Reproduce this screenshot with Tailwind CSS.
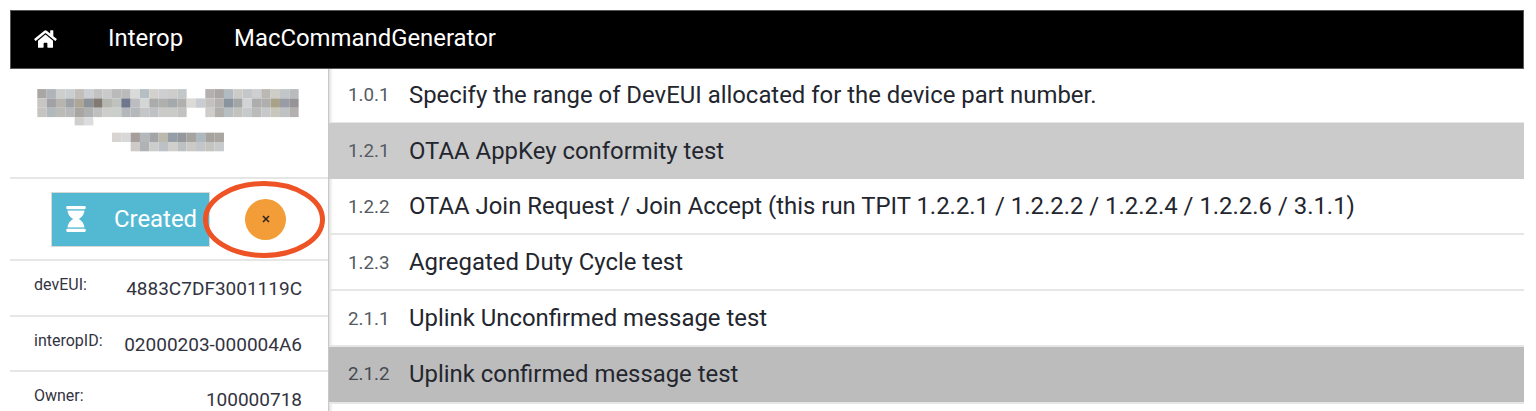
<!DOCTYPE html>
<html>
<head>
<meta charset="utf-8">
<script src="https://cdn.jsdelivr.net/npm/@tailwindcss/browser@4"></script>
</head>
<body class="bg-white">
<div class="h-[411px] w-[1536px] overflow-hidden pt-[10px] pl-[10px] pr-[12px] font-['Roboto',sans-serif]">
  <nav class="h-[59px] bg-black border border-[#555] flex items-center text-white text-[23.9px] pb-[1px]">
    <svg class="ml-[23px] w-[23px] h-[20px]" viewBox="0 0 576 512" fill="#fff"><path d="M280.37 148.26L96 300.11V464a16 16 0 0 0 16 16l112.06-.29a16 16 0 0 0 15.92-16V368a16 16 0 0 1 16-16h64a16 16 0 0 1 16 16v95.64a16 16 0 0 0 16 16.05L464 480a16 16 0 0 0 16-16V300L295.67 148.26a12.19 12.19 0 0 0-15.3 0zM571.6 251.47L488 182.56V44.05a12 12 0 0 0-12-12h-56a12 12 0 0 0-12 12v72.61L318.47 43a48 48 0 0 0-61 0L4.34 251.47a12 12 0 0 0-1.6 16.9l25.5 31A12 12 0 0 0 45.15 301l235.22-193.74a12.19 12.19 0 0 1 15.3 0L530.9 301a12 12 0 0 0 16.9-1.6l25.5-31a12 12 0 0 0-1.7-16.93z"/></svg>
    <span class="ml-[51px]">Interop</span>
    <span class="ml-[51px]">MacCommandGenerator</span>
  </nav>
  <div class="flex">
    <aside class="relative w-[318px] shrink-0 text-[#33333f]">
      <div class="h-[110px] border-b-2 border-[#e6e6e6] flex justify-center pt-[20px]">
        <svg class="w-[280px] h-[79px] blur-[0.6px] brightness-[0.9]" viewBox="0 0 270 76">
          <g fill="#c9c5c2"><rect x="8" y="0" width="9" height="9" fill="#bdb8b6"/><rect x="17" y="0" width="9" height="9" fill="#c4c8cc"/><rect x="26" y="0" width="9" height="9" fill="#e4e6e6"/><rect x="35" y="0" width="9" height="9" fill="#e2e5e8"/><rect x="44" y="0" width="9" height="9" fill="#d8d4d0"/><rect x="53" y="0" width="9" height="9" fill="#e2e5e9"/><rect x="62" y="0" width="9" height="9" fill="#d8d8d8"/><rect x="71" y="0" width="9" height="9" fill="#e0e0e0"/><rect x="80" y="0" width="9" height="9" fill="#cfcfcf"/><rect x="89" y="0" width="9" height="9" fill="#cfd0d0"/><rect x="98" y="0" width="9" height="9" fill="#f2f2f2"/><rect x="107" y="0" width="9" height="9" fill="#c9d3d8"/><rect x="116" y="0" width="9" height="9" fill="#ebe8e4"/><rect x="125" y="0" width="9" height="9" fill="#e4e6e8"/><rect x="134" y="0" width="9" height="9" fill="#e6e4e2"/><rect x="143" y="0" width="9" height="9" fill="#d8dde0"/><rect x="170" y="0" width="9" height="9" fill="#c8c4c2"/><rect x="179" y="0" width="9" height="9" fill="#bdb9b8"/><rect x="188" y="0" width="9" height="9" fill="#c6d0d6"/><rect x="197" y="0" width="9" height="9" fill="#e4e2de"/><rect x="206" y="0" width="9" height="9" fill="#d9dde0"/><rect x="215" y="0" width="9" height="9" fill="#e4e6e8"/><rect x="224" y="0" width="9" height="9" fill="#d0ccc8"/><rect x="233" y="0" width="9" height="9" fill="#e6e4de"/><rect x="242" y="0" width="9" height="9" fill="#d8dcde"/><rect x="251" y="0" width="9" height="9" fill="#cdd0d2"/>
          <rect x="8" y="9" width="9" height="9" fill="#dedcd8"/><rect x="17" y="9" width="9" height="9" fill="#b4b4b8"/><rect x="26" y="9" width="9" height="9" fill="#ccc9c4"/><rect x="35" y="9" width="9" height="9" fill="#b0b4b8"/><rect x="44" y="9" width="9" height="9" fill="#c0b8a8"/><rect x="53" y="9" width="9" height="9" fill="#9ca2a8"/><rect x="62" y="9" width="9" height="9" fill="#8f8880"/><rect x="71" y="9" width="9" height="9" fill="#c8cac4"/><rect x="80" y="9" width="9" height="9" fill="#d4d8d2"/><rect x="89" y="9" width="9" height="9" fill="#7a849c"/><rect x="98" y="9" width="9" height="9" fill="#d0d2d4"/><rect x="107" y="9" width="9" height="9" fill="#eceeee"/><rect x="116" y="9" width="9" height="9" fill="#bebebe"/><rect x="125" y="9" width="9" height="9" fill="#c2c2c0"/><rect x="134" y="9" width="9" height="9" fill="#b8bcbe"/><rect x="143" y="9" width="9" height="9" fill="#c4c4c2"/><rect x="152" y="9" width="9" height="9" fill="#f4f2ee"/><rect x="161" y="9" width="9" height="9" fill="#dfe4e8"/><rect x="170" y="9" width="9" height="9" fill="#d8d6d2"/><rect x="179" y="9" width="9" height="9" fill="#c8c6c4"/><rect x="188" y="9" width="9" height="9" fill="#98a4b0"/><rect x="197" y="9" width="9" height="9" fill="#b4b8b8"/><rect x="206" y="9" width="9" height="9" fill="#e8eaec"/><rect x="215" y="9" width="9" height="9" fill="#c0c0c0"/><rect x="224" y="9" width="9" height="9" fill="#c2c2c0"/><rect x="233" y="9" width="9" height="9" fill="#bcb498"/><rect x="242" y="9" width="9" height="9" fill="#a8adb8"/><rect x="251" y="9" width="9" height="9" fill="#a8a4a8"/>
          <rect x="8" y="18" width="9" height="9" fill="#dcdad6"/><rect x="17" y="18" width="9" height="9" fill="#c6ced2"/><rect x="26" y="18" width="9" height="9" fill="#d0d0cc"/><rect x="35" y="18" width="9" height="9" fill="#ccced0"/><rect x="44" y="18" width="9" height="9" fill="#bcb8b4"/><rect x="53" y="18" width="9" height="9" fill="#c4c4c4"/><rect x="62" y="18" width="9" height="9" fill="#d4d4d4"/><rect x="71" y="18" width="9" height="9" fill="#e4e4e2"/><rect x="80" y="18" width="9" height="9" fill="#e2e6e2"/><rect x="89" y="18" width="9" height="9" fill="#c8ccd0"/><rect x="98" y="18" width="9" height="9" fill="#c8ccd0"/><rect x="107" y="18" width="9" height="9" fill="#dcdcdc"/><rect x="116" y="18" width="9" height="9" fill="#d4d8da"/><rect x="125" y="18" width="9" height="9" fill="#e0e0de"/><rect x="134" y="18" width="9" height="9" fill="#e0e0de"/><rect x="143" y="18" width="9" height="9" fill="#d8d8d6"/><rect x="170" y="18" width="9" height="9" fill="#e6e4e0"/><rect x="179" y="18" width="9" height="9" fill="#c4c2be"/><rect x="188" y="18" width="9" height="9" fill="#ccd4d8"/><rect x="197" y="18" width="9" height="9" fill="#d8d8d4"/><rect x="206" y="18" width="9" height="9" fill="#dce0e2"/><rect x="215" y="18" width="9" height="9" fill="#d0d0ce"/><rect x="224" y="18" width="9" height="9" fill="#dcdedf"/><rect x="233" y="18" width="9" height="9" fill="#dfdcd0"/><rect x="242" y="18" width="9" height="9" fill="#d4d6d8"/><rect x="251" y="18" width="9" height="9" fill="#c8c4c4"/>
          <rect x="44" y="27" width="9" height="8" fill="#e8e6e4"/><rect x="53" y="27" width="9" height="8" fill="#f2f4f6"/>
          <rect x="80" y="42" width="9" height="9" fill="#efece8"/><rect x="89" y="42" width="9" height="9" fill="#f0f0f0"/><rect x="98" y="42" width="9" height="9" fill="#b8b0ac"/><rect x="107" y="42" width="9" height="9" fill="#c8ccd0"/><rect x="116" y="42" width="9" height="9" fill="#b4b6ba"/><rect x="125" y="42" width="9" height="9" fill="#d0ccc0"/><rect x="134" y="42" width="9" height="9" fill="#a4b0ba"/><rect x="143" y="42" width="9" height="9" fill="#a4a8ac"/><rect x="152" y="42" width="9" height="9" fill="#b8b4b0"/><rect x="161" y="42" width="9" height="9" fill="#c0ccd4"/><rect x="170" y="42" width="9" height="9" fill="#b8b4b0"/><rect x="179" y="42" width="9" height="9" fill="#bcb8b4"/>
          <rect x="98" y="51" width="9" height="9" fill="#e4e2de"/><rect x="107" y="51" width="9" height="9" fill="#c4c6c8"/><rect x="116" y="51" width="9" height="9" fill="#e2e4e4"/><rect x="125" y="51" width="9" height="9" fill="#d0d6da"/><rect x="134" y="51" width="9" height="9" fill="#e8e6e2"/><rect x="143" y="51" width="9" height="9" fill="#d2d6d8"/><rect x="152" y="51" width="9" height="9" fill="#e2e0dc"/><rect x="161" y="51" width="9" height="9" fill="#d8dcdf"/><rect x="170" y="51" width="9" height="9" fill="#dcdad6"/><rect x="179" y="51" width="9" height="9" fill="#dde0e2"/></g>
        </svg>
      </div>
      <div class="h-[82px] border-b-2 border-[#e6e6e6] flex items-center pl-[41px]">
        <div class="w-[159px] h-[55px] bg-[#53b9d3] border border-[#d8d8d8] flex items-center text-white text-[23.9px] pt-[2px]">
          <svg class="ml-[13px] -mt-[2px] w-[22px] h-[26px]" viewBox="0 0 384 512" fill="#fff"><path d="M360 0H24C10.745 0 0 10.745 0 24v16c0 13.255 10.745 24 24 24 0 90.965 51.016 167.734 120.842 192C75.016 280.266 24 357.035 24 448c-13.255 0-24 10.745-24 24v16c0 13.255 10.745 24 24 24h336c13.255 0 24-10.745 24-24v-16c0-13.255-10.745-24-24-24 0-90.965-51.016-167.734-120.842-192C308.984 231.734 360 154.965 360 64c13.255 0 24-10.745 24-24V24c0-13.255-10.745-24-24-24z"/><rect x="0" y="64" width="384" height="26" fill="#53b9d3"/><rect x="0" y="422" width="384" height="26" fill="#53b9d3"/></svg>
          <span class="ml-[27px]">Created</span>
        </div>
        <div class="ml-[35px] w-[41px] h-[41px] rounded-full bg-[#f29d38] flex items-center justify-center">
          <svg class="w-[8px] h-[8px]" viewBox="0 0 8 8" stroke="#2a2118" stroke-width="1.5"><path d="M1 1l6 6M7 1l-6 6"/></svg>
        </div>
      </div>
      <svg class="absolute left-[193px] top-[112px] w-[122px] h-[77px] pointer-events-none" viewBox="0 0 122 77" fill="none"><ellipse cx="61" cy="38.5" rx="58.5" ry="36" stroke="#ee5326" stroke-width="5"/></svg>
      <div class="h-[56px] border-b-2 border-[#e6e6e6] flex justify-between pl-[24px] pr-[26px]">
        <span class="text-[16px] pt-[12px]">devEUI:</span><span class="text-[19px] pt-[14px]">4883C7DF3001119C</span>
      </div>
      <div class="h-[55px] border-b-2 border-[#e6e6e6] flex justify-between pl-[24px] pr-[26px]">
        <span class="text-[16px] pt-[12px]">interopID:</span><span class="text-[19px] pt-[14px]">02000203-000004A6</span>
      </div>
      <div class="h-[40px] flex justify-between pl-[24px] pr-[26px]">
        <span class="text-[16px] pt-[12px]">Owner:</span><span class="text-[19px] pt-[14px]">100000718</span>
      </div>
    </aside>
    <main class="flex-1 border-l-[1px] border-[#c8c8c8] text-[23.9px] text-[#23262e] bg-[linear-gradient(90deg,#e0e0e0,#fff_4px)]">
      <div class="h-[54px] flex items-center border-b border-[#e6e6e6]"><span class="w-[80px] pl-[19px] text-[18.8px] text-[#555b62]">1.0.1</span><span>Specify the range of DevEUI allocated for the device part number.</span></div>
      <div class="h-[56px] flex items-center bg-[#cbcbcb] pt-[1px]"><span class="w-[80px] pl-[19px] text-[18.8px] text-[#555b62]">1.2.1</span><span>OTAA AppKey conformity test</span></div>
      <div class="h-[56px] flex items-center border-b-2 border-[#e6e6e6] pt-[2px]"><span class="w-[80px] pl-[19px] text-[18.8px] text-[#555b62]">1.2.2</span><span>OTAA Join Request / Join Accept (this run TPIT 1.2.2.1 / 1.2.2.2 / 1.2.2.4 / 1.2.2.6 / 3.1.1)</span></div>
      <div class="h-[56px] flex items-center border-b-2 border-[#e6e6e6] pt-[2px]"><span class="w-[80px] pl-[19px] text-[18.8px] text-[#555b62]">1.2.3</span><span>Agregated Duty Cycle test</span></div>
      <div class="h-[56px] flex items-center border-b-2 border-[#e6e6e6] pt-[2px]"><span class="w-[80px] pl-[19px] text-[18.8px] text-[#555b62]">2.1.1</span><span>Uplink Unconfirmed message test</span></div>
      <div class="h-[57px] flex items-center bg-[#bcbcbc] border-b-2 border-[#e6e6e6]"><span class="w-[80px] pl-[19px] text-[18.8px] text-[#444a52]">2.1.2</span><span>Uplink confirmed message test</span></div>
    </main>
  </div>
</div>
</body>
</html>
